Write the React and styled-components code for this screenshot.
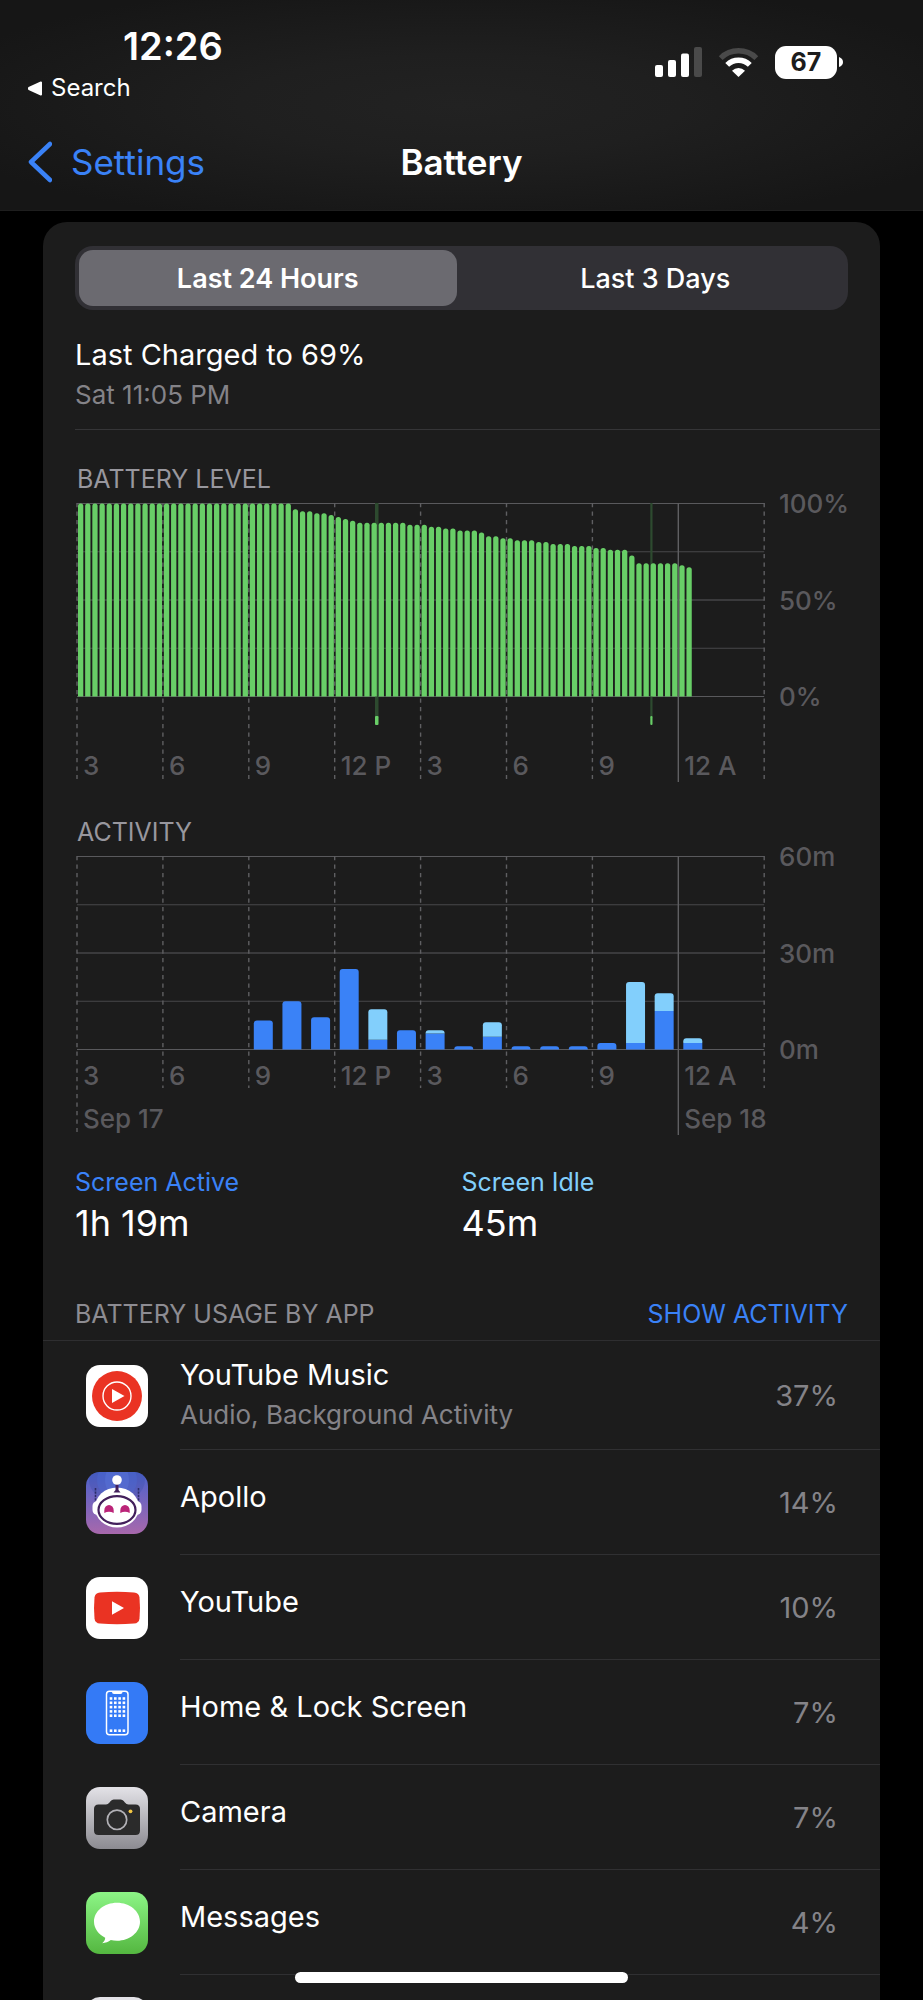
import React, { useState } from 'react';
import styled, { createGlobalStyle } from 'styled-components';

const GlobalStyle = createGlobalStyle`
  * {
    box-sizing: border-box;
  }

  body {
    margin: 0;
    background-color: #000;
    color: #fff;
    font-family: Inter, "Liberation Sans", sans-serif;
  }

  button {
    margin: 0;
    padding: 0;
    border: none;
    background: none;
    color: inherit;
    font-family: inherit;
    cursor: pointer;
  }

  a {
    text-decoration: none;
  }

  h1, h2, p, ul, dl, dd {
    margin: 0;
    padding: 0;
    font-weight: 400;
  }
`

const Screen = styled.div`
  position: relative;
  display: flex;
  flex-direction: column;
  height: 100vh;
  overflow: hidden;
`

const Header = styled.header`
  flex: none;
  padding-top: 22px;
  background-color: #171717;
  background-image: radial-gradient(ellipse 60% 60% at 50% 50%, #222 0%, #1f1f1f 40%, #161616 100%);
  border-bottom: 1px solid #1e1e1e;
`

const StatusBar = styled.div`
  display: flex;
  justify-content: space-between;
  padding: 0 80px 0 28px;
`

const Time = styled.div`
  padding-left: 95px;
  font-size: 38px;
  font-weight: 600;
  line-height: 48px;
`

const BackToApp = styled.a`
  display: flex;
  align-items: center;
  gap: 8px;
  color: #fff;
  font-size: 24px;
  line-height: 36px;
`

const StatusIcons = styled.div`
  display: flex;
  align-items: center;
  gap: 16px;
  height: 80px;
`

const BatteryBadge = styled.div`
  display: flex;
  align-items: center;
  gap: 2px;
`

const BatteryBody = styled.div`
  width: 62px;
  height: 33px;
  border-radius: 11px;
  background-color: #fff;
  color: #1c1c1c;
  font-size: 25px;
  font-weight: 700;
  line-height: 33px;
  text-align: center;
`

const NavBar = styled.nav`
  display: grid;
  grid-template-columns: 1fr auto 1fr;
  align-items: center;
  height: 96px;
  margin-top: 8px;
  padding: 0 28px;
`

const BackLink = styled.a`
  display: flex;
  align-items: center;
  gap: 19px;
  color: #3a82f7;
  font-size: 35px;
`

const Title = styled.h1`
  font-size: 35px;
  font-weight: 600;
`

const Content = styled.main`
  flex: 1;
  min-height: 0;
  overflow-y: auto;
  scrollbar-width: none;
  padding: 11px 43px 0;
`

const Card = styled.section`
  padding-top: 24px;
  border-radius: 24px 24px 0 0;
  background-color: #1c1c1c;
`

const Segmented = styled.div`
  display: flex;
  gap: 10px;
  height: 64px;
  margin: 0 32px;
  padding: 4px;
  border-radius: 18px;
  background-color: #313035;
`

const Segment = styled.button`
  flex: 1 1 0;
  border-radius: 14px;
  background-color: ${p => p.$active ? '#6b6a70' : 'transparent'};
  color: #fff;
  font-size: 27px;
  font-weight: ${p => p.$active ? 600 : 500};
`

const Summary = styled.div`
  margin-left: 32px;
  padding: 25px 0 14px;
  border-bottom: 1px solid #353537;
`

const Primary = styled.p`
  font-size: 29px;
  line-height: 40px;
`

const Secondary = styled.p`
  color: #848388;
  font-size: 26px;
  line-height: 40px;
`

const ChartSection = styled.section`
  padding: 33px 32px 0;
`

const ChartTitle = styled.h2`
  margin-bottom: 8px;
  padding-left: 2px;
  color: #98979e;
  font-size: 25px;
  line-height: 32px;
`

const ChartSvg = styled.svg`
  display: block;
  width: 100%;
  overflow: visible;

  text {
    fill: #5a595d;
    font-size: 26px;
    font-weight: 500;
  }
`

const Totals = styled.dl`
  display: grid;
  grid-template-columns: 1fr 1fr;
  padding: 30px 32px 0;
`

const TotalLabel = styled.dt`
  color: ${p => p.$color};
  font-size: 25px;
  line-height: 32px;
`

const TotalValue = styled.dd`
  font-size: 36px;
  line-height: 50px;
`

const UsageHeader = styled.div`
  display: flex;
  justify-content: space-between;
  padding: 50px 32px 10px;
  border-bottom: 1px solid #2e2e30;
  font-size: 25px;
  line-height: 32px;
`

const UsageTitle = styled.h2`
  color: #8d8c92;
  font-size: inherit;
`

const ShowButton = styled.button`
  color: #3a82f7;
  font-size: inherit;
  line-height: inherit;
`

const AppList = styled.ul`
  list-style: none;
`

const AppRow = styled.li`
  display: flex;
  align-items: center;
  gap: 32px;
  padding-left: 43px;
`

const AppIcon = styled.svg`
  flex: none;
  width: 62px;
  height: 62px;
  border-radius: 14px;
`

const AppBody = styled.div`
  flex: 1;
  display: flex;
  align-items: center;
  justify-content: space-between;
  min-height: 105px;
  padding: 14px 42px 14px 0;
  border-bottom: 1px solid #303032;
`

const AppInfo = styled.div`
  padding-bottom: ${p => p.$single ? 10 : 0}px;
`

const Percent = styled.span`
  color: #848388;
  font-size: 29px;
`

const HomeIndicator = styled.div`
  position: absolute;
  bottom: 17px;
  left: 32%;
  right: 32%;
  height: 11px;
  border-radius: 6px;
  background-color: #fff;
`

const PLOT_LEFT = 2
const PLOT_WIDTH = 687.2
const PLOT_HEIGHT = 193
const COLUMN = PLOT_WIDTH / 8
const HOURS = ['3', '6', '9', '12 P', '3', '6', '9', '12 A', '']
const MIDNIGHT = 7

// [level, number of 15 minute samples]
const LEVEL_RUNS = [
  [100, 30], [97, 1], [96, 2], [95, 2], [94, 1], [93, 1], [92, 1], [91, 1],
  [90, 7], [89, 3], [88, 2], [87, 2], [86, 3], [85, 1], [83, 2], [82, 2],
  [81, 3], [80, 2], [79, 3], [78, 3], [77, 2], [76, 3], [73, 1], [69, 6],
  [68, 1], [67, 1],
]
const LEVELS = LEVEL_RUNS.flatMap(([level, count]) => Array(count).fill(level))

const CHARGES = [
  { x: 300, width: 3.5 },
  { x: 575.3, width: 2.2 },
]

// minutes per hour of the day
const ACTIVITY = [
  { hour: 6, active: 9, idle: 0 },
  { hour: 7, active: 15, idle: 0 },
  { hour: 8, active: 10, idle: 0 },
  { hour: 9, active: 25, idle: 0 },
  { hour: 10, active: 3, idle: 9.5 },
  { hour: 11, active: 6, idle: 0 },
  { hour: 12, active: 5, idle: 1 },
  { hour: 13, active: 1, idle: 0 },
  { hour: 14, active: 4, idle: 4.5 },
  { hour: 15, active: 1, idle: 0 },
  { hour: 16, active: 1, idle: 0 },
  { hour: 17, active: 1, idle: 0 },
  { hour: 18, active: 2, idle: 0 },
  { hour: 19, active: 2, idle: 19 },
  { hour: 20, active: 12, idle: 5.5 },
  { hour: 21, active: 2, idle: 1.5 },
]

// bar with only its top corners rounded
const barPath = (x, top, width, bottom, radius) => {
  const r = Math.min(radius, bottom - top)
  return `M${x} ${bottom}V${top + r}Q${x} ${top} ${x + r} ${top}H${x + width - r}Q${x + width} ${top} ${x + width} ${top + r}V${bottom}Z`
}

const Grid = ({ labels, labelY, lineEnd }) => (
  <g>
    {[0, 1, 2, 3, 4].map(i => (
      <line
        key={i}
        x1={PLOT_LEFT}
        x2={PLOT_LEFT + PLOT_WIDTH}
        y1={0.5 + i * PLOT_HEIGHT / 4}
        y2={0.5 + i * PLOT_HEIGHT / 4}
        stroke={i % 2 ? '#47474a' : '#59595c'}
      />
    ))}
    {HOURS.map((hour, i) => {
      const x = PLOT_LEFT + i * COLUMN
      return (
        <g key={i}>
          <line
            x1={x}
            x2={x}
            y1={0}
            y2={lineEnd(i)}
            stroke="#5f5f62"
            strokeWidth={1.4}
            strokeDasharray={i === MIDNIGHT ? undefined : '4.25 4.25'}
          />
          <text x={x + 6} y={labelY}>{hour}</text>
        </g>
      )
    })}
    {labels.map((label, i) => (
      <text key={label} x={704} y={10 + i * PLOT_HEIGHT / 2}>{label}</text>
    ))}
  </g>
)

const LevelChart = () => (
  <ChartSvg viewBox="0 0 773 280" role="img" aria-label="Battery level">
    <Grid labels={['100%', '50%', '0%']} labelY={272} lineEnd={i => i === MIDNIGHT ? 279 : 276} />
    {CHARGES.map(({ x, width }) => (
      <g key={x}>
        <rect x={x} y={0} width={width} height={215} fill="#2d4a2f" />
        <rect x={x} y={213} width={width} height={9} rx={1} fill="#68ce67" />
      </g>
    ))}
    {LEVELS.map((level, i) => (
      <path
        key={i}
        d={barPath(PLOT_LEFT + 1 + i * COLUMN / 12, PLOT_HEIGHT * (1 - level / 100) + 0.5, 5.3, PLOT_HEIGHT + 0.5, 2.5)}
        fill="#68ce67"
      />
    ))}
  </ChartSvg>
)

const dateLineEnd = i => {
  if (i === MIDNIGHT) return 279
  return i === 0 ? 276 : 232
}

const ActivityChart = () => (
  <ChartSvg viewBox="0 0 773 280" role="img" aria-label="Activity">
    <Grid labels={['60m', '30m', '0m']} labelY={229} lineEnd={dateLineEnd} />
    <text x={PLOT_LEFT + 6} y={272}>Sep 17</text>
    <text x={PLOT_LEFT + MIDNIGHT * COLUMN + 6} y={272}>Sep 18</text>
    {ACTIVITY.map(({ hour, active, idle }) => {
      const x = PLOT_LEFT + 5 + hour * COLUMN / 3
      const minute = PLOT_HEIGHT / 60
      const split = PLOT_HEIGHT - active * minute + 0.5
      return (
        <g key={hour}>
          <path d={barPath(x, split, 19, PLOT_HEIGHT + 0.5, idle ? 0 : 3)} fill="#3a82f7" />
          {idle > 0 && <path d={barPath(x, split - idle * minute, 19, split, 3)} fill="#82cffc" />}
        </g>
      )
    })}
  </ChartSvg>
)

const YouTubeMusicIcon = () => (
  <AppIcon viewBox="0 0 62 62">
    <rect width="62" height="62" fill="#fff" />
    <circle cx="31" cy="31" r="25" fill="#ea3323" />
    <circle cx="31" cy="31" r="14" fill="none" stroke="#fff" strokeWidth="1.4" />
    <path d="M26 24v14l12.5-7z" fill="#fff" />
  </AppIcon>
)

const ApolloIcon = () => (
  <AppIcon viewBox="0 0 62 62">
    <defs>
      <linearGradient id="apollo" x1="0" y1="0" x2="0" y2="1">
        <stop offset="0" stopColor="#4961cc" />
        <stop offset="1" stopColor="#a868ac" />
      </linearGradient>
    </defs>
    <rect width="62" height="62" fill="url(#apollo)" />
    <ellipse cx="31" cy="8" rx="28" ry="22" fill="#3c50a8" opacity="0.35" />
    <ellipse cx="31" cy="8" rx="20" ry="20" fill="#4c68cf" opacity="0.5" />
    <ellipse cx="31" cy="8" rx="12" ry="16" fill="#5c79dc" opacity="0.4" />
    <path d="M9.5 16v14M52.5 16v14" stroke="#2c2c68" strokeWidth="1.6" strokeDasharray="2.4 1" />
    <rect x="6.5" y="29" width="12" height="14" rx="5" fill="#fff" />
    <rect x="43.5" y="29" width="12" height="14" rx="5" fill="#fff" />
    <ellipse cx="31" cy="35.5" rx="22" ry="20" fill="#fff" />
    <path d="M29.5 11h3v7l2 2.5h-7l2-2.5z" fill="#43205c" />
    <circle cx="31" cy="8" r="4.8" fill="#fff" />
    <ellipse cx="31" cy="38" rx="18.5" ry="13.8" fill="#fff" stroke="#43205c" strokeWidth="2.2" />
    <path d="M18.3 41v-2.5a4.7 5.5 0 0 1 9.4 0V41q-4.7-2.5-9.4 0zM34.3 41v-2.5a4.7 5.5 0 0 1 9.4 0V41q-4.7-2.5-9.4 0z" fill="#bb2478" />
  </AppIcon>
)

const YouTubeIcon = () => (
  <AppIcon viewBox="0 0 62 62">
    <rect width="62" height="62" fill="#fff" />
    <path d="M14 15.4Q31 14.2 48 15.4Q53 15.8 53.5 20.5Q54.5 31 53.5 41.5Q53 46.2 48 46.6Q31 47.800 14 46.6Q9 46.2 8.5 41.5Q7.5 31 8.5 20.5Q9 15.8 14 15.4Z" fill="#ea3323" />
    <path d="M26 24.2v13.6L38 31z" fill="#fff" />
  </AppIcon>
)

const HomeScreenIcon = () => (
  <AppIcon viewBox="0 0 62 62">
    <rect width="62" height="62" fill="#347af6" />
    <rect x="20.5" y="9.2" width="21.5" height="43.5" rx="3" fill="none" stroke="#fff" strokeWidth="1.5" />
    <path d="M26 9h10.5v1q0 2-2 2H28q-2 0-2-2z" fill="#fff" />
    {[15.2, 19.5, 23.8, 28.1, 32.4, 47.4].map(y => (
      [23.7, 28, 32.3, 36.6].map(x => (
        <rect key={`${x}-${y}`} x={x} y={y} width="2.6" height="2.6" fill="#fff" />
      ))
    ))}
  </AppIcon>
)

const CameraIcon = () => (
  <AppIcon viewBox="0 0 62 62">
    <defs>
      <linearGradient id="camera" x1="0" y1="0" x2="0" y2="1">
        <stop offset="0" stopColor="#e3e2e7" />
        <stop offset="1" stopColor="#8c8b91" />
      </linearGradient>
    </defs>
    <rect width="62" height="62" fill="url(#camera)" />
    <path d="M12.5 17.5H20q2 0 3.5-2l1.2-1.5q1.2-1.6 3-1.6h7q1.8 0 3 1.6l1.2 1.5q1.5 2 3.5 2h7.1q4.5 0 4.5 4.5v21.5q0 4.5-4.5 4.5h-37q-4.5 0-4.5-4.5V22q0-4.5 4.5-4.5z" fill="#2b2b2b" />
    <circle cx="31" cy="32.8" r="9.7" fill="none" stroke="#b2b1b6" strokeWidth="1.7" />
    <circle cx="44.5" cy="24.3" r="1.9" fill="#f3c644" />
  </AppIcon>
)

const MessagesIcon = () => (
  <AppIcon viewBox="0 0 62 62">
    <defs>
      <linearGradient id="messages" x1="0" y1="0" x2="0" y2="1">
        <stop offset="0" stopColor="#8cf586" />
        <stop offset="1" stopColor="#54b740" />
      </linearGradient>
    </defs>
    <rect width="62" height="62" fill="url(#messages)" />
    <path d="M31 10.8c12.7 0 23 8.5 23 19s-10.3 19-23 19c-2.2 0-4.2-.2-6.2-.7-2.3 1.9-5.3 3-8.6 3.1 1.8-1.5 3-3.2 3-5.4C12.5 42.4 8 36.5 8 29.8c0-10.5 10.3-19 23-19z" fill="#fff" />
  </AppIcon>
)

const BlankIcon = () => (
  <AppIcon viewBox="0 0 62 62">
    <rect width="62" height="62" fill="#e3e2e7" />
  </AppIcon>
)

const APPS = [
  { name: 'YouTube Music', detail: 'Audio, Background Activity', percent: '37%', Icon: YouTubeMusicIcon },
  { name: 'Apollo', percent: '14%', Icon: ApolloIcon },
  { name: 'YouTube', percent: '10%', Icon: YouTubeIcon },
  { name: 'Home & Lock Screen', percent: '7%', Icon: HomeScreenIcon },
  { name: 'Camera', percent: '7%', Icon: CameraIcon },
  { name: 'Messages', percent: '4%', Icon: MessagesIcon },
]

const PhoneHeader = () => (
  <Header>
    <StatusBar>
      <div>
        <Time>12:26</Time>
        <BackToApp href="#search">
          <svg width="15" height="15" viewBox="0 0 15 15">
            <path d="M13 1.5v12L1.5 8.3q-1.3-.8 0-1.6z" fill="#fff" stroke="#fff" strokeWidth="2" strokeLinejoin="round" />
          </svg>
          Search
        </BackToApp>
      </div>
      <StatusIcons>
        <svg width="47" height="30" viewBox="0 0 47 30">
          <rect x="0" y="18" width="8" height="12" rx="2" fill="#fff" />
          <rect x="13" y="13" width="8" height="17" rx="2" fill="#fff" />
          <rect x="26" y="6.5" width="8" height="23.5" rx="2" fill="#fff" />
          <rect x="39" y="0" width="8" height="30" rx="2" fill="#4a4a4a" />
        </svg>
        <svg width="41" height="30" viewBox="0 0 41 30">
          <path d="M2.7 11.1a25.5 25.5 0 0 1 35.6 0" fill="none" stroke="#4a4a4a" strokeWidth="5.5" />
          <path d="M9.2 17.9a16.2 16.2 0 0 1 22.6 0" fill="none" stroke="#fff" strokeWidth="5.5" />
          <path d="M20.5 30l-6.5-6.3a9.3 9.3 0 0 1 13 0z" fill="#fff" />
        </svg>
        <BatteryBadge>
          <BatteryBody>67</BatteryBody>
          <svg width="4" height="10" viewBox="0 0 4 10">
            <path d="M0 0q4 1.5 4 5t-4 5z" fill="#fff" />
          </svg>
        </BatteryBadge>
      </StatusIcons>
    </StatusBar>
    <NavBar>
      <BackLink href="#settings">
        <svg width="24" height="42" viewBox="0 0 24 42">
          <path d="M22 3L3 21l19 18" fill="none" stroke="#3a82f7" strokeWidth="4.5" strokeLinecap="round" strokeLinejoin="round" />
        </svg>
        Settings
      </BackLink>
      <Title>Battery</Title>
    </NavBar>
  </Header>
)

const RANGES = ['Last 24 Hours', 'Last 3 Days']

const App = () => {
  const [range, setRange] = useState(RANGES[0])

  return (
    <Screen>
      <GlobalStyle />
      <PhoneHeader />
      <Content>
        <Card>
          <Segmented>
            {RANGES.map(name => (
              <Segment
                key={name}
                type="button"
                $active={name === range}
                aria-pressed={name === range}
                onClick={() => setRange(name)}
              >
                {name}
              </Segment>
            ))}
          </Segmented>
          <Summary>
            <Primary>Last Charged to 69%</Primary>
            <Secondary>Sat 11:05 PM</Secondary>
          </Summary>
          <ChartSection>
            <ChartTitle>BATTERY LEVEL</ChartTitle>
            <LevelChart />
          </ChartSection>
          <ChartSection>
            <ChartTitle>ACTIVITY</ChartTitle>
            <ActivityChart />
          </ChartSection>
          <Totals>
            <div>
              <TotalLabel $color="#3a82f7">Screen Active</TotalLabel>
              <TotalValue>1h 19m</TotalValue>
            </div>
            <div>
              <TotalLabel $color="#82cffc">Screen Idle</TotalLabel>
              <TotalValue>45m</TotalValue>
            </div>
          </Totals>
          <UsageHeader>
            <UsageTitle>BATTERY USAGE BY APP</UsageTitle>
            <ShowButton type="button">SHOW ACTIVITY</ShowButton>
          </UsageHeader>
          <AppList>
            {APPS.map(({ name, detail, percent, Icon }) => (
              <AppRow key={name}>
                <Icon />
                <AppBody>
                  <AppInfo $single={!detail}>
                    <Primary>{name}</Primary>
                    {detail && <Secondary>{detail}</Secondary>}
                  </AppInfo>
                  <Percent>{percent}</Percent>
                </AppBody>
              </AppRow>
            ))}
            <AppRow>
              <BlankIcon />
              <AppBody />
            </AppRow>
          </AppList>
        </Card>
      </Content>
      <HomeIndicator />
    </Screen>
  )
}

export default App
